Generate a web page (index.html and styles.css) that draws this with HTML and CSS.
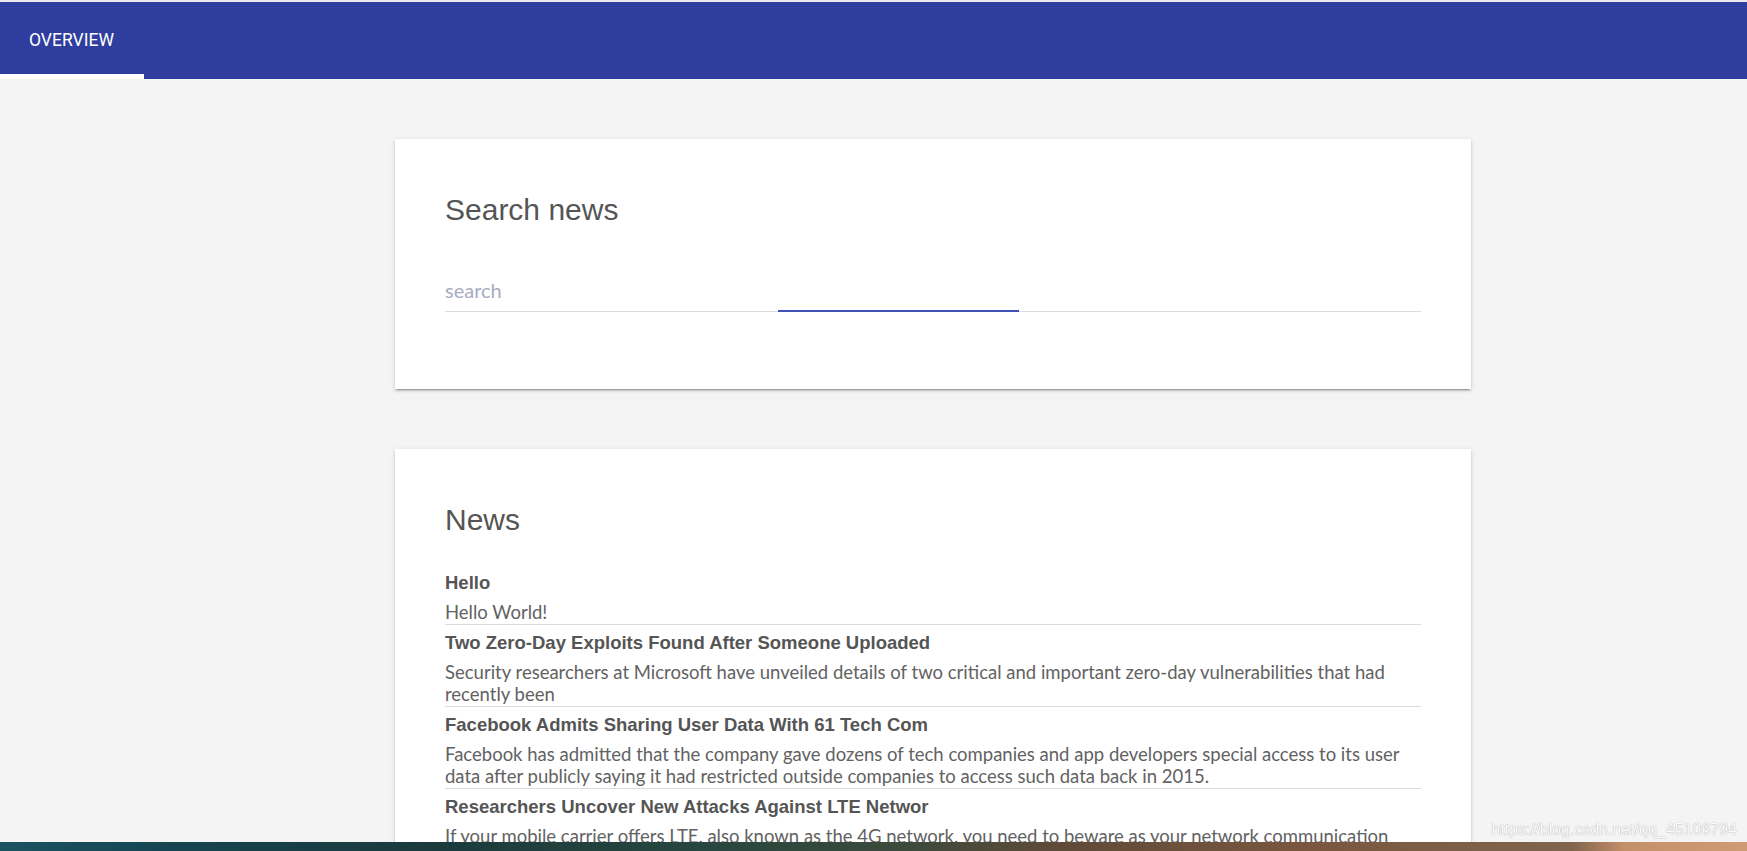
FILE: index.html
```html
<!DOCTYPE html>
<html lang="en">
<head>
<meta charset="utf-8">
<title>News</title>
<link rel="stylesheet" href="styles.css">
</head>
<body>
<header class="appbar">
  <nav class="tabs">
    <a class="tab tab-active" href="#">OVERVIEW</a>
  </nav>
</header>

<main class="container">
  <section class="card">
    <h2 class="card-title">Search news</h2>
    <div class="field">
      <input class="field-input" type="text" placeholder="search">
      <span class="field-bar"></span>
    </div>
  </section>

  <section class="card card-news">
    <h2 class="card-title">News</h2>
    <ul class="news-list">
      <li class="news-item">
        <h3 class="news-title">Hello</h3>
        <p class="news-desc">Hello World!</p>
      </li>
      <li class="news-item">
        <h3 class="news-title">Two Zero-Day Exploits Found After Someone Uploaded</h3>
        <p class="news-desc">Security researchers at Microsoft have unveiled details of two critical and important zero-day vulnerabilities that had recently been</p>
      </li>
      <li class="news-item">
        <h3 class="news-title">Facebook Admits Sharing User Data With 61 Tech Com</h3>
        <p class="news-desc">Facebook has admitted that the company gave dozens of tech companies and app developers special access to its user data after publicly saying it had restricted outside companies to access such data back in 2015.</p>
      </li>
      <li class="news-item">
        <h3 class="news-title">Researchers Uncover New Attacks Against LTE Networ</h3>
        <p class="news-desc">If your mobile carrier offers LTE, also known as the 4G network, you need to beware as your network communication can be hijacked remotely.</p>
      </li>
    </ul>
  </section>
</main>

<div class="watermark">https://blog.csdn.net/qq_45106794</div>
<div class="taskbar"></div>
</body>
</html>
```
FILE: styles.css
```css
html {
  scrollbar-width: none;
}
html::-webkit-scrollbar {
  display: none;
}
body {
  margin: 0;
  background: #f4f4f4;
  font-family: Lato, "Open Sans", sans-serif;
  color: #5c5c5c;
}

/* App bar */
.appbar {
  border-top: 2px solid #e9e9ec;
  background: #2f3e9e;
  height: 77px;
  display: flex;
}
.tabs {
  display: flex;
}
.tab {
  box-sizing: border-box;
  width: 144px;
  height: 77px;
  padding: 28px 0 0 29px;
  font-family: Roboto, "Liberation Sans", sans-serif;
  font-size: 17.5px;
  line-height: 20px;
  color: #ffffff;
  text-decoration: none;
  border-bottom: 5px solid transparent;
}
.tab-active {
  border-bottom-color: #ffffff;
}

/* Layout */
.container {
  width: 1076px;
  margin: 60px 0 0 395px;
  display: flex;
  flex-direction: column;
  gap: 60px;
}
.card {
  background: #ffffff;
  padding: 54px 50px;
  box-shadow: 0 2px 2px 0 rgba(0, 0, 0, 0.14), 0 3px 1px -2px rgba(0, 0, 0, 0.2), 0 1px 5px 0 rgba(0, 0, 0, 0.12);
}
.card-title {
  margin: 0;
  font-family: "Liberation Sans", Arial, sans-serif;
  font-weight: 400;
  font-size: 30px;
  line-height: 34.5px;
  color: #555555;
}

/* Search field */
.field {
  position: relative;
  margin: 50px 0 23px;
}
.field-input {
  display: block;
  box-sizing: content-box;
  width: 100%;
  height: 24px;
  margin: 0;
  padding: 0 0 9.5px;
  border: none;
  border-bottom: 1px solid #dcdcdc;
  background: transparent;
  outline: none;
  font-family: Lato, "Open Sans", sans-serif;
  font-size: 20px;
  line-height: 24px;
  color: #555555;
}
.field-input::placeholder {
  color: #a7abbf;
}
.field-bar {
  position: absolute;
  left: 333px;
  bottom: 0;
  width: 241px;
  height: 2px;
  background: #3f51b5;
}

/* News list */
.news-list {
  list-style: none;
  margin: 27px 0 0;
  padding: 0;
}
.news-item {
  padding: 6px 0 1px;
  border-bottom: 1px solid #dcdcdc;
}
.news-title {
  margin: 0 0 6px;
  font-family: "Liberation Sans", Arial, sans-serif;
  font-weight: 700;
  font-size: 18.5px;
  line-height: 24px;
  color: #555555;
}
.news-desc {
  margin: 0;
  font-family: Lato, "Open Sans", sans-serif;
  font-size: 18.5px;
  line-height: 22px;
  color: #626262;
}

/* Screenshot overlays */
.watermark {
  position: fixed;
  right: 10px;
  bottom: 12px;
  font-family: "Liberation Sans", Arial, sans-serif;
  font-size: 16px;
  line-height: 18px;
  color: #fbfbfb;
  text-shadow: 0 0 1px #a0a0a0, 0 0 1px #c0c0c0;
}
.taskbar {
  position: fixed;
  left: 0;
  right: 0;
  bottom: 0;
  height: 9px;
  background: linear-gradient(90deg, #1b5262 0%, #164450 10%, #1b3a3c 25%, #27463f 40%, #3c4a3c 52%, #5e4a38 60%, #7a573f 75%, #80644c 90%, #c4906a 93%, #d09a74 100%);
}
```
